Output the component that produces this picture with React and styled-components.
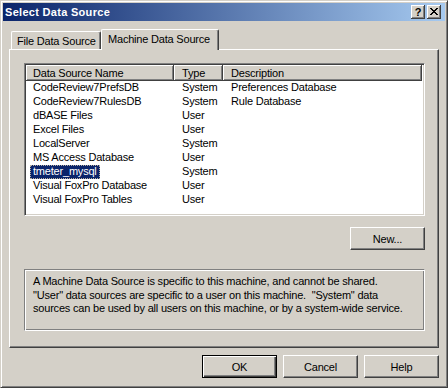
import styled, { createGlobalStyle } from 'styled-components';

const GlobalStyle = createGlobalStyle`
  html, body {
    margin: 0;
    padding: 0;
    background: #d4d0c8;
  }
  * {
    box-sizing: border-box;
  }
`;

const Window = styled.div`
  width: 448px;
  height: 388px;
  padding: 2px;
  background: #d4d0c8;
  border: 1px solid;
  border-color: #d4d0c8 #404040 #404040 #d4d0c8;
  box-shadow: inset 1px 1px 0 #fff, inset -1px -1px 0 #808080;
  font-family: 'Liberation Sans', Arial, sans-serif;
  font-size: 11px;
  letter-spacing: -0.2px;
  color: #000;
  display: flex;
  flex-direction: column;
`;

const TitleBar = styled.div`
  height: 18px;
  display: flex;
  align-items: center;
  justify-content: space-between;
  padding: 0 4px 0 2px;
  background: linear-gradient(to right, #0a246a, #a6caf0);
`;

const Title = styled.span`
  color: #fff;
  font-weight: bold;
  letter-spacing: 0.3px;
`;

const CaptionButtons = styled.div`
  display: flex;
  gap: 2px;
`;

const CaptionButton = styled.div`
  width: 14px;
  height: 14px;
  background: #d4d0c8;
  box-shadow: inset -1px -1px 0 #404040, inset 1px 1px 0 #fff,
    inset -2px -2px 0 #808080;
  display: flex;
  align-items: center;
  justify-content: center;
  font-weight: bold;
  font-size: 11px;
  letter-spacing: 0;
  padding-bottom: 1px;
`;

const Body = styled.div`
  flex: 1;
  display: flex;
  flex-direction: column;
  padding: 8px 4px 0 6px;
`;

const TabRow = styled.div`
  height: 20px;
  display: flex;
  align-items: flex-end;
  padding-left: 2px;
`;

const Tab = styled.div`
  position: relative;
  width: ${(p) => p.$w}px;
  height: ${(p) => (p.$active ? 21 : 18)}px;
  margin-bottom: ${(p) => (p.$active ? -1 : 0)}px;
  z-index: ${(p) => (p.$active ? 1 : 0)};
  background: #d4d0c8;
  border-left: 1px solid #fff;
  border-top: 1px solid #fff;
  border-right: 1px solid #404040;
  border-radius: 2px 2px 0 0;
  box-shadow: inset -1px 0 0 #808080;
  padding: ${(p) => (p.$active ? '3px 0 0 6px' : '3px 0 0 5px')};
  white-space: nowrap;
`;

const Panel = styled.div`
  width: 430px;
  height: 299px;
  border: 1px solid;
  border-color: #fff #404040 #404040 #fff;
  box-shadow: inset -1px -1px 0 #808080;
  padding: 13px 13px 0 14px;
  display: flex;
  flex-direction: column;
`;

const ListView = styled.div`
  width: 401px;
  height: 153px;
  background: #fff;
  border: 1px solid;
  border-color: #808080 #fff #fff #808080;
  box-shadow: inset 1px 1px 0 #404040, inset -1px -1px 0 #d4d0c8;
  padding: 1px;
`;

const HeaderRow = styled.div`
  display: flex;
  height: 16px;
`;

const HeaderCell = styled.div`
  width: ${(p) => p.$w}px;
  height: 16px;
  background: #d4d0c8;
  box-shadow: inset -1px -1px 0 #404040, inset 1px 1px 0 #fff,
    inset -2px -2px 0 #808080;
  padding: 2px 0 0 ${(p) => p.$pad}px;
  white-space: nowrap;
`;

const Row = styled.div`
  display: flex;
  height: 14px;
  line-height: 13px;
`;

const Cell = styled.div`
  width: ${(p) => p.$w}px;
  padding-left: ${(p) => p.$pad}px;
  white-space: nowrap;
`;

const NameLabel = styled.span`
  display: inline-block;
  height: 14px;
  padding: 0 2px;
  border: 1px dotted ${(p) => (p.$selected ? '#b8b0a0' : 'transparent')};
  background: ${(p) => (p.$selected ? '#0a246a' : 'transparent')};
  color: ${(p) => (p.$selected ? '#fff' : '#000')};
  line-height: 11px;
`;

const NewRow = styled.div`
  display: flex;
  justify-content: flex-end;
  margin-top: 11px;
`;

const PushButton = styled.div`
  width: 75px;
  height: 23px;
  background: #d4d0c8;
  display: flex;
  align-items: center;
  justify-content: center;
  border: 1px solid ${(p) => (p.$default ? '#000' : '#fff')};
  border-right-color: ${(p) => (p.$default ? '#000' : '#404040')};
  border-bottom-color: ${(p) => (p.$default ? '#000' : '#404040')};
  box-shadow: ${(p) =>
    p.$default
      ? 'inset 1px 1px 0 #fff, inset -1px -1px 0 #404040, inset -2px -2px 0 #808080'
      : 'inset -1px -1px 0 #808080'};
`;

const InfoBox = styled.div`
  margin-top: 19px;
  width: 401px;
  height: 62px;
  border: 1px solid #808080;
  border-right-color: #fff;
  border-bottom-color: #fff;
  box-shadow: inset 1px 1px 0 #fff, inset -1px -1px 0 #808080;
  padding: 5px 0 0 8px;
  line-height: 13.5px;
  white-space: pre;
`;

const ButtonRow = styled.div`
  display: flex;
  justify-content: flex-end;
  gap: 6px;
  margin-top: 7px;
  padding-right: 2px;
`;

const rows = [
  ['CodeReview7PrefsDB', 'System', 'Preferences Database'],
  ['CodeReview7RulesDB', 'System', 'Rule Database'],
  ['dBASE Files', 'User', ''],
  ['Excel Files', 'User', ''],
  ['LocalServer', 'System', ''],
  ['MS Access Database', 'User', ''],
  ['tmeter_mysql', 'System', ''],
  ['Visual FoxPro Database', 'User', ''],
  ['Visual FoxPro Tables', 'User', ''],
];

const CloseIcon = () => (
  <svg width="8" height="7" viewBox="0 0 8 7" shapeRendering="crispEdges">
    <path
      d="M0 0h2v1h-2zM6 0h2v1h-2zM1 1h2v1h-2zM5 1h2v1h-2zM2 2h4v1h-4zM3 3h2v1h-2zM2 4h4v1h-4zM1 5h2v1h-2zM5 5h2v1h-2zM0 6h2v1h-2zM6 6h2v1h-2z"
      fill="#000"
    />
  </svg>
);

const App = () => {
  const selected = 'tmeter_mysql';
  return (
    <>
      <GlobalStyle />
      <Window>
        <TitleBar>
          <Title>Select Data Source</Title>
          <CaptionButtons>
            <CaptionButton>?</CaptionButton>
            <CaptionButton>
              <CloseIcon />
            </CaptionButton>
          </CaptionButtons>
        </TitleBar>
        <Body>
          <TabRow>
            <Tab $w={90}>File Data Source</Tab>
            <Tab $w={118} $active>
              Machine Data Source
            </Tab>
          </TabRow>
          <Panel>
            <ListView>
              <HeaderRow>
                <HeaderCell $w={148} $pad={7}>Data Source Name</HeaderCell>
                <HeaderCell $w={49} $pad={8}>Type</HeaderCell>
                <HeaderCell $w={199} $pad={8}>Description</HeaderCell>
              </HeaderRow>
              {rows.map(([name, type, desc]) => (
                <Row key={name}>
                  <Cell $w={148} $pad={4}>
                    <NameLabel $selected={name === selected}>{name}</NameLabel>
                  </Cell>
                  <Cell $w={49} $pad={8}>{type}</Cell>
                  <Cell $w={199} $pad={8}>{desc}</Cell>
                </Row>
              ))}
            </ListView>
            <NewRow>
              <PushButton>New...</PushButton>
            </NewRow>
            <InfoBox>
              {'A Machine Data Source is specific to this machine, and cannot be shared.\n"User" data sources are specific to a user on this machine.  "System" data\nsources can be used by all users on this machine, or by a system-wide service.'}
            </InfoBox>
          </Panel>
          <ButtonRow>
            <PushButton $default>OK</PushButton>
            <PushButton>Cancel</PushButton>
            <PushButton>Help</PushButton>
          </ButtonRow>
        </Body>
      </Window>
    </>
  );
};

export default App;
